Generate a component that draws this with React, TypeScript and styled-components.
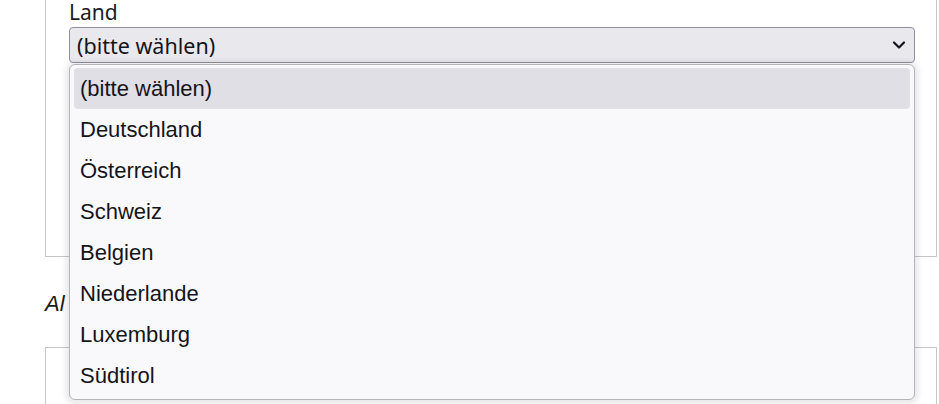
import React from 'react';
import styled, { createGlobalStyle } from 'styled-components';

const GlobalStyle = createGlobalStyle`
  html, body {
    margin: 0;
    padding: 0;
    background: #ffffff;
  }
  body {
    width: 939px;
    height: 404px;
    overflow: hidden;
    font-family: 'Liberation Sans', Arial, sans-serif;
    color: #1b1b1b;
  }
`;

const Page = styled.div`
  display: flex;
  flex-direction: column;
  padding: 0 2px 0 45px;
`;

const Box = styled.div<{ $height: number }>`
  position: relative;
  height: ${p => p.$height}px;
  margin-top: -1px;
  border: 1px solid #c6c6c6;
  padding: 0 21px 0 23px;
  box-sizing: border-box;
`;

const Field = styled.div`
  position: relative;
  display: flex;
  flex-direction: column;
  gap: 2px;
`;

const Label = styled.label`
  font-family: 'Noto Sans', sans-serif;
  font-size: 21px;
  line-height: 25px;
  color: #1b1b1b;
`;

const SelectBox = styled.div`
  display: flex;
  align-items: center;
  justify-content: space-between;
  height: 36px;
  box-sizing: border-box;
  padding: 0 8px 0 7px;
  background: #e9e8ed;
  border: 1px solid #8f8f9d;
  border-radius: 4px;
  font-family: 'Noto Sans', sans-serif;
  font-size: 21.5px;
  color: #15141a;
`;

const Menu = styled.ul`
  position: absolute;
  top: 64px;
  left: 0;
  right: 0;
  margin: 0;
  padding: 3px 4px 3px;
  list-style: none;
  background: #f9f9fb;
  border: 1px solid #b4b4b8;
  border-radius: 6px;
  box-shadow: 0 1px 5px 4px rgba(0, 0, 0, 0.08);
  z-index: 2;
`;

const Option = styled.li<{ $active?: boolean }>`
  height: 41px;
  display: flex;
  align-items: center;
  padding-left: 6px;
  border-radius: 4px;
  font-family: 'Liberation Sans', Arial, sans-serif;
  font-size: 22px;
  color: #15141a;
  background: ${p => (p.$active ? '#e0dfe5' : 'transparent')};
`;

const Hint = styled.p`
  margin: 33px 0 0;
  font-style: italic;
  font-size: 22px;
  line-height: 28px;
  color: #1b1b1b;
`;

const NextBox = styled.div`
  margin-top: 29px;
  height: 57px;
  border: 1px solid #c6c6c6;
  border-bottom: none;
  box-sizing: border-box;
`;

const Chevron = () => (
  <svg width="14" height="10" viewBox="0 0 14 10" aria-hidden>
    <path d="M2 2.5 L7 7.5 L12 2.5" fill="none" stroke="#15141a" strokeWidth="2.2" strokeLinecap="round" strokeLinejoin="round" />
  </svg>
);

const countries = [
  '(bitte wählen)',
  'Deutschland',
  'Österreich',
  'Schweiz',
  'Belgien',
  'Niederlande',
  'Luxemburg',
  'Südtirol',
];

const App: React.FC = () => (
  <>
    <GlobalStyle />
    <Page>
      <Box $height={258}>
        <Field>
          <Label>Land</Label>
          <SelectBox>
            <span>(bitte wählen)</span>
            <Chevron />
          </SelectBox>
          <Menu>
            {countries.map((c, i) => (
              <Option key={c} $active={i === 0}>
                {c}
              </Option>
            ))}
          </Menu>
        </Field>
      </Box>
      <Hint>Al</Hint>
      <NextBox />
    </Page>
  </>
);

export default App;
